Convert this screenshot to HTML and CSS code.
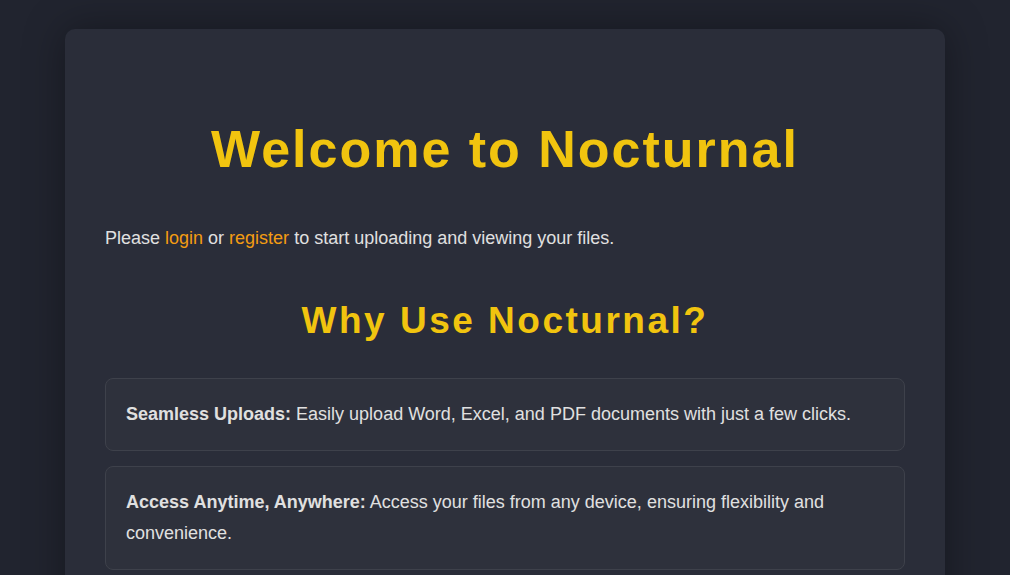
FILE: index.html
```html
<!DOCTYPE html>
<html lang="en">
<head>
<meta charset="utf-8">
<title>Nocturnal</title>
<link rel="stylesheet" href="styles.css">
</head>
<body>
  <main class="card">
    <h1 class="title">Welcome to Nocturnal</h1>
    <p class="intro">Please <a href="#" class="link">login</a> or <a href="#" class="link">register</a> to start uploading and viewing your files.</p>
    <h2 class="subtitle">Why Use Nocturnal?</h2>
    <div class="features">
      <div class="feature"><strong>Seamless Uploads:</strong> Easily upload Word, Excel, and PDF documents with just a few clicks.</div>
      <div class="feature"><strong>Access Anytime, Anywhere:</strong> Access your files from any device, ensuring flexibility and convenience.</div>
      <div class="feature"><strong>Secure Storage:</strong> Your files are stored safely and privately.</div>
    </div>
  </main>
</body>
</html>
```
FILE: styles.css
```css
html, body {
  margin: 0;
  padding: 0;
}
body {
  background: #21242f;
  font-family: "Liberation Sans", Arial, sans-serif;
  color: #e0e0e0;
  font-size: 18px;
  line-height: 1.7;
  padding-top: 29px;
}
.card {
  width: 800px;
  margin: 0 auto;
  padding: 40px;
  background: #2a2d39;
  border-radius: 10px;
  box-shadow: 0 0 40px rgba(0, 0, 0, 0.35);
}
.title {
  margin: 50px 0 0;
  font-size: 52px;
  line-height: normal;
  letter-spacing: 2px;
  text-align: center;
  color: #f1c40f;
  font-weight: bold;
}
.intro {
  margin: 44px 0 0;
}
.link {
  color: #f39c12;
  text-decoration: none;
}
.subtitle {
  margin: 46px 0 0;
  font-size: 37px;
  line-height: normal;
  letter-spacing: 2.5px;
  text-align: center;
  color: #f1c40f;
  font-weight: bold;
}
.features {
  margin-top: 36px;
  display: flex;
  flex-direction: column;
  gap: 15px;
}
.feature {
  padding: 20px 20px 20px;
  line-height: 31px;
  background: #2e313c;
  border: 1px solid #3e414b;
  border-radius: 8px;
}
.feature strong {
  font-weight: bold;
}
```
